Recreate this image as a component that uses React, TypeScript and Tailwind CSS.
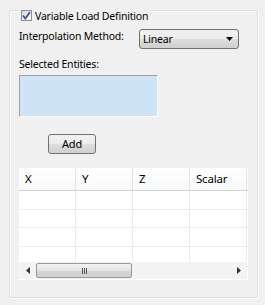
import React from "react";

const btnBg =
  "bg-[linear-gradient(to_bottom,#f2f2f2_0%,#ebebeb_48%,#dddddd_52%,#cfcfcf_100%)]";

export default function App() {
  const cols = ["X", "Y", "Z", "Scalar"];
  return (
    <div
      className="w-[265px] h-[305px] bg-[#f0f0f0] pt-[10px] pl-[9px] text-[10.5px] tracking-[-0.2px] leading-[14px] text-black"
      style={{ fontFamily: '"Noto Sans", "Open Sans", sans-serif' }}
    >
      <div className="w-[249px] h-[288px] border border-[#d5dfe5] rounded-[3px] shadow-[inset_1px_1px_0_#ffffff,1px_1px_0_#ffffff] flex flex-col">
        {/* header */}
        <div className="-mt-[3px] ml-[9px] h-[15px] w-fit px-[2px] bg-[#f0f0f0] flex items-center gap-[3px]">
          <div className="w-[11px] h-[11px] border border-[#8e8f8f] bg-[linear-gradient(135deg,#d8d8d8,#ffffff)] flex items-center justify-center">
            <svg width="9" height="9" viewBox="0 0 9 9">
              <path d="M1 4.5 L3.3 7.5 L8 1" fill="none" stroke="#3e5590" strokeWidth="1.8" />
            </svg>
          </div>
          <span>Variable Load Definition</span>
        </div>

        {/* interpolation */}
        <div className="mt-[6px] ml-[9px] flex items-start h-[20px]">
          <span className="w-[120px]">Interpolation Method:</span>
          <div
            className={`w-[100px] h-[20px] border border-[#707070] rounded-[3px] ${btnBg} flex items-center justify-between pl-[3px] pr-[5px]`}
          >
            <span>Linear</span>
            <svg width="7" height="4" viewBox="0 0 7 4">
              <path d="M0 0 H7 L3.5 4 Z" fill="#000" />
            </svg>
          </div>
        </div>

        {/* selected entities */}
        <div className="mt-[8px] ml-[9px] h-[14px]">Selected Entities:</div>
        <div className="mt-[4px] ml-[9px] w-[139px] h-[42px] bg-[#cfe3f7] border border-[#a0a0a0] border-r-white border-b-white" />

        {/* add button */}
        <div
          className={`mt-[17px] ml-[38px] w-[48px] h-[20px] border border-[#707070] rounded-[3px] ${btnBg} flex items-center justify-center text-[11px]`}
        >
          Add
        </div>

        {/* table */}
        <div className="mt-[14px] ml-[9px] w-[229px] h-[112px] bg-white flex flex-col">
          <div className="h-[23px] flex border-b border-[#d5d5d5] bg-[linear-gradient(to_bottom,#ffffff,#f7f8fa)]">
            {cols.map((c) => (
              <div
                key={c}
                className="w-[57px] border-r border-[#e3e5e8] flex items-center pl-[6px] text-[11.5px]"
              >
                {c}
              </div>
            ))}
          </div>
          {[19, 18, 19, 15].map((h, i) => (
            <div
              key={i}
              className={`flex ${i < 3 ? "border-b border-[#ececec]" : ""}`}
              style={{ height: h }}
            >
              {cols.map((c) => (
                <div key={c} className="w-[57px] border-r border-[#ececec]" />
              ))}
            </div>
          ))}
          {/* scrollbar */}
          <div className="h-[17px] w-[228px] flex items-center bg-[#f3f3f3]">
            <div className="w-[17px] h-[17px] flex items-center justify-center">
              <svg width="4" height="7" viewBox="0 0 4 7">
                <path d="M4 0 V7 L0 3.5 Z" fill="#333" />
              </svg>
            </div>
            <div className="w-[96px] h-[15px] border border-[#9a9a9a] rounded-[2px] bg-[linear-gradient(to_bottom,#f4f4f4,#e4e4e4_50%,#d6d6d6_51%,#cfcfcf)] flex items-center justify-center">
              <div className="flex gap-[1px]">
                <div className="w-[1px] h-[6px] bg-[#555]" />
                <div className="w-[1px] h-[6px] bg-[#555]" />
                <div className="w-[1px] h-[6px] bg-[#555]" />
              </div>
            </div>
            <div className="flex-1" />
            <div className="w-[17px] h-[17px] flex items-center justify-center">
              <svg width="4" height="7" viewBox="0 0 4 7">
                <path d="M0 0 V7 L4 3.5 Z" fill="#333" />
              </svg>
            </div>
          </div>
        </div>
      </div>
    </div>
  );
}
